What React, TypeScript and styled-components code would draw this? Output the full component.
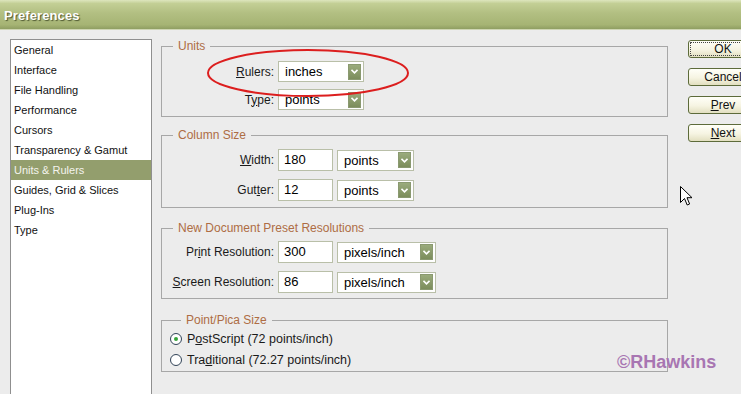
import React from 'react';
import styled, { createGlobalStyle, css } from 'styled-components';

const GlobalStyle = createGlobalStyle`
  html, body {
    margin: 0;
    padding: 0;
    background: #ececec;
    overflow: hidden;
  }
  body {
    font-family: 'Liberation Sans', Arial, sans-serif;
    color: #000;
  }
`;

const Window = styled.div`
  position: relative;
  width: 741px;
  height: 394px;
  overflow: hidden;
  background: #ececec;
`;

const TitleBar = styled.div`
  height: 30px;
  box-sizing: border-box;
  display: flex;
  align-items: center;
  padding: 2px 0 0 4px;
  background: linear-gradient(
    #dde6bd 0%,
    #c3cf95 12%,
    #b2bf82 45%,
    #a6b474 85%,
    #8f9e62 100%
  );
  border-bottom: 1px solid #cfd6b4;
`;

const Title = styled.span`
  font-size: 13px;
  font-weight: bold;
  color: #fff;
  text-shadow: 1px 1px 1px #4c5630;
  letter-spacing: 0.1px;
`;

const Body = styled.div`
  display: flex;
  align-items: flex-start;
  padding: 9px 0 0 10px;
`;

const CategoryList = styled.ul`
  list-style: none;
  margin: 0 9px 0 0;
  padding: 0;
  width: 142px;
  height: 400px;
  box-sizing: border-box;
  background: #fff;
  border: 1px solid #8f8f8f;
  flex-shrink: 0;
`;

const Category = styled.li<{ $selected?: boolean }>`
  height: 20px;
  line-height: 20px;
  padding-left: 3px;
  font-size: 11px;
  color: #111;
  ${(p) =>
    p.$selected &&
    css`
      background: #939e6d;
      color: #f4f4ee;
    `}
`;

const Main = styled.div`
  width: 507px;
  flex-shrink: 0;
  display: flex;
  flex-direction: column;
`;

const Group = styled.fieldset<{ $top: number; $padTop: number; $padBottom: number; $padLeft?: number }>`
  margin: ${(p) => p.$top}px 0 0 0;
  padding: ${(p) => p.$padTop}px 0 ${(p) => p.$padBottom}px ${(p) => p.$padLeft ?? 0}px;
  border: 1px solid #a7a7a7;
  min-width: 0;
`;

const Legend = styled.legend`
  margin-left: 11px;
  padding: 0 5px;
  font-size: 12px;
  line-height: 14px;
  color: #ae6d44;
`;

const FormGrid = styled.div<{ $columns: string; $rowHeight: number; $rowGap: number }>`
  display: grid;
  grid-template-columns: ${(p) => p.$columns};
  grid-auto-rows: ${(p) => p.$rowHeight}px;
  column-gap: 4px;
  row-gap: ${(p) => p.$rowGap}px;
  align-items: center;
`;

const Label = styled.label`
  text-align: right;
  font-size: 12px;
  color: #1a1a1a;
  white-space: nowrap;
`;

const TextField = styled.div`
  box-sizing: border-box;
  height: 22px;
  border: 1px solid #b9bfa8;
  background: #fff;
  font-size: 13px;
  line-height: 20px;
  padding-left: 5px;
`;

const Select = styled.div<{ $width: number }>`
  box-sizing: border-box;
  width: ${(p) => p.$width}px;
  height: 21px;
  border: 1px solid #b9bfa8;
  background: #fff;
  display: flex;
  align-items: center;
  justify-content: space-between;
  padding: 0 2px 0 6px;
  font-size: 13px;
`;

const ArrowBox = styled.span`
  width: 13px;
  height: 16px;
  display: flex;
  align-items: center;
  justify-content: center;
  background: linear-gradient(#9aab7c, #7c8d5c);
  border: 1px solid #8a9970;
  box-sizing: border-box;
`;

const RadioRow = styled.label`
  display: flex;
  align-items: center;
  height: 21px;
  font-size: 12.5px;
  color: #1a1a1a;
  gap: 5px;
`;

const RadioCircle = styled.span<{ $checked?: boolean }>`
  width: 12px;
  height: 12px;
  box-sizing: border-box;
  border-radius: 50%;
  border: 1px solid #34465a;
  background: radial-gradient(circle, #fff 60%, #e4e4e4 100%);
  display: flex;
  align-items: center;
  justify-content: center;
  &::after {
    content: '';
    width: 4px;
    height: 4px;
    border-radius: 50%;
    background: ${(p) => (p.$checked ? '#36a43a' : 'transparent')};
  }
`;

const ButtonColumn = styled.div`
  margin: 1px 0 0 20px;
  display: flex;
  flex-direction: column;
  gap: 10px;
  flex-shrink: 0;
`;

const Button = styled.div<{ $focused?: boolean }>`
  position: relative;
  width: 70px;
  height: 18px;
  box-sizing: border-box;
  border: 1px solid #5d6b3a;
  border-radius: 3px;
  background: linear-gradient(#fffff8 0%, #f6f4e2 55%, #e2dfc0 100%);
  font-size: 12px;
  line-height: 16px;
  text-align: center;
  color: #111;
  ${(p) =>
    p.$focused &&
    css`
      outline: 1px dotted #444;
      outline-offset: -3px;
    `}
`;

const Ellipse = styled.svg`
  position: absolute;
  left: 206px;
  top: 48px;
`;

const Pointer = styled.svg`
  position: absolute;
  left: 680px;
  top: 186px;
`;

const Watermark = styled.div`
  position: absolute;
  left: 617px;
  top: 352px;
  font-size: 18px;
  line-height: 20px;
  font-weight: bold;
  color: #a876b2;
`;

const categories = [
  'General',
  'Interface',
  'File Handling',
  'Performance',
  'Cursors',
  'Transparency & Gamut',
  'Units & Rulers',
  'Guides, Grid & Slices',
  'Plug-Ins',
  'Type',
];

const Chevron = () => (
  <svg width="7" height="5" viewBox="0 0 7 5">
    <path d="M0.5 0.8 L3.5 3.8 L6.5 0.8" fill="none" stroke="#fff" strokeWidth="1.6" />
  </svg>
);

const Dropdown = ({ value, width }: { value: string; width: number }) => (
  <Select $width={width}>
    <span>{value}</span>
    <ArrowBox>
      <Chevron />
    </ArrowBox>
  </Select>
);

export default function App() {
  return (
    <Window>
      <GlobalStyle />
      <TitleBar>
        <Title>Preferences</Title>
      </TitleBar>
      <Body>
        <CategoryList>
          {categories.map((c) => (
            <Category key={c} $selected={c === 'Units & Rulers'}>
              {c}
            </Category>
          ))}
        </CategoryList>

        <Main>
          <Group $top={0} $padTop={8} $padBottom={6}>
            <Legend>Units</Legend>
            <FormGrid $columns="112px 86px" $rowHeight={21} $rowGap={7}>
              <Label>
                <u>R</u>ulers:
              </Label>
              <Dropdown value="inches" width={86} />
              <Label>
                T<u>y</u>pe:
              </Label>
              <Dropdown value="points" width={86} />
            </FormGrid>
          </Group>

          <Group $top={11} $padTop={7} $padBottom={6}>
            <Legend>Column Size</Legend>
            <FormGrid $columns="112px 55px 77px" $rowHeight={22} $rowGap={8}>
              <Label>
                <u>W</u>idth:
              </Label>
              <TextField>180</TextField>
              <Dropdown value="points" width={77} />
              <Label>
                Gut<u>t</u>er:
              </Label>
              <TextField>12</TextField>
              <Dropdown value="points" width={77} />
            </FormGrid>
          </Group>

          <Group $top={13} $padTop={6} $padBottom={5}>
            <Legend>New Document Preset Resolutions</Legend>
            <FormGrid $columns="112px 55px 99px" $rowHeight={22} $rowGap={8}>
              <Label>
                Pr<u>i</u>nt Resolution:
              </Label>
              <TextField>300</TextField>
              <Dropdown value="pixels/inch" width={99} />
              <Label>
                <u>S</u>creen Resolution:
              </Label>
              <TextField>86</TextField>
              <Dropdown value="pixels/inch" width={99} />
            </FormGrid>
          </Group>

          <Group $top={14} $padTop={1} $padBottom={1} $padLeft={8}>
            <Legend>Point/Pica Size</Legend>
            <RadioRow>
              <RadioCircle $checked />
              <span>
                P<u>o</u>stScript (72 points/inch)
              </span>
            </RadioRow>
            <RadioRow>
              <RadioCircle />
              <span>
                Tra<u>d</u>itional (72.27 points/inch)
              </span>
            </RadioRow>
          </Group>
        </Main>

        <ButtonColumn>
          <Button $focused>OK</Button>
          <Button>Cancel</Button>
          <Button>
            <u>P</u>rev
          </Button>
          <Button>
            <u>N</u>ext
          </Button>
        </ButtonColumn>
      </Body>

      <Ellipse width="204" height="52" viewBox="0 0 204 52">
        <ellipse cx="102" cy="25" rx="100" ry="23" fill="none" stroke="#dc1e1e" strokeWidth="2" />
      </Ellipse>

      <Pointer width="13" height="21" viewBox="0 0 13 21">
        <path
          d="M0.5 0.5 L0.5 16.5 L4.5 12.5 L7.2 19 L9.6 18 L7 11.7 L12 11.7 Z"
          fill="#fff"
          stroke="#000"
          strokeWidth="1"
          strokeLinejoin="miter"
        />
      </Pointer>

      <Watermark>©RHawkins</Watermark>
    </Window>
  );
}
